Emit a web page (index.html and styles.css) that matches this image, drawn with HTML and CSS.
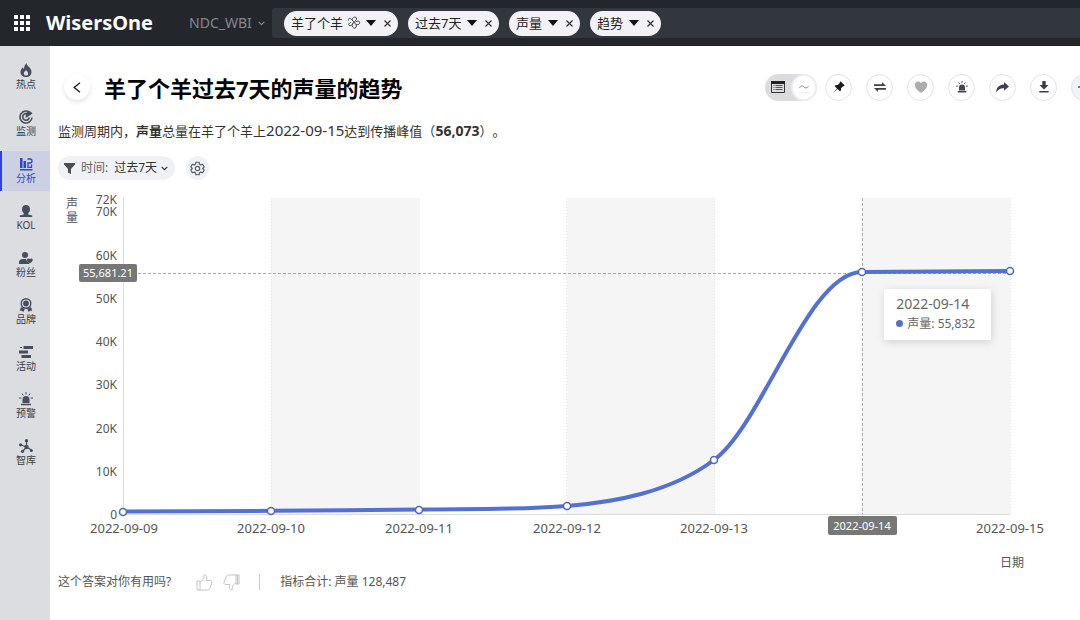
FILE: index.html
```html
<!DOCTYPE html>
<html lang="zh-CN">
<head>
    <meta charset="utf-8">
    <meta name="viewport" content="width=device-width, initial-scale=1.0">
    <title>WisersOne</title>
    <link rel="stylesheet" href="styles.css">
</head>
<body>
    <header class="topbar">
        <button class="apps" aria-label="应用">
            <svg width="16" height="16" viewBox="0 0 16 16" fill="#fff"><path d="M0 0h4v4H0zM6 0h4v4H6zM12 0h4v4h-4zM0 6h4v4H0zM6 6h4v4H6zM12 6h4v4h-4zM0 12h4v4H0zM6 12h4v4H6zM12 12h4v4h-4z"/></svg>
        </button>
        <a class="brand" href="#">WisersOne</a>
        <div class="workspace">
            <select aria-label="工作区"><option>NDC_WBI</option></select>
            <svg width="7" height="5" viewBox="0 0 7 5" fill="none" stroke="#84888d" stroke-width="1.2"><path d="M.7.8l2.8 2.8L6.3.8"/></svg>
        </div>
        <div class="query">
            <div class="chip">
                <select aria-label="对象"><option>羊了个羊</option></select>
                <svg class="pretzel" width="14" height="14" viewBox="0 0 14 14" fill="none" stroke="#444" stroke-width="1"><path d="M1.500 4.500C.8 2.500 3 1.500 4.300 3L9 8.500M3.800 6.500C2 6.800 1 8.500 2.200 9.500c1.300 1 3-.5 3.800-2.500M5 4c0-2.500 3.500-3.800 4.500-2 .8 1.500-1.500 3-3 4.500-1.800 1.800-1.800 4.500.2 5.500 2 .8 3.300-1.200 2.300-3.500M8.500 6c1.800-1.500 4.300-1 4.200.8-.1 1.600-2.200 2.200-3.700 1.700"/></svg>
                <svg class="caret" width="10" height="6" viewBox="0 0 10 6"><path d="M0 0h10L5 6z"/></svg>
                <button aria-label="移除"><svg width="7" height="7" viewBox="0 0 7 7"><path d="M.5.5l6 6M6.5.5l-6 6"/></svg></button>
            </div>
            <div class="chip">
                <select aria-label="时间范围"><option>过去7天</option></select>
                <svg class="caret" width="10" height="6" viewBox="0 0 10 6"><path d="M0 0h10L5 6z"/></svg>
                <button aria-label="移除"><svg width="7" height="7" viewBox="0 0 7 7"><path d="M.5.5l6 6M6.5.5l-6 6"/></svg></button>
            </div>
            <div class="chip">
                <select aria-label="指标"><option>声量</option></select>
                <svg class="caret" width="10" height="6" viewBox="0 0 10 6"><path d="M0 0h10L5 6z"/></svg>
                <button aria-label="移除"><svg width="7" height="7" viewBox="0 0 7 7"><path d="M.5.5l6 6M6.5.5l-6 6"/></svg></button>
            </div>
            <div class="chip">
                <select aria-label="分析方式"><option>趋势</option></select>
                <svg class="caret" width="10" height="6" viewBox="0 0 10 6"><path d="M0 0h10L5 6z"/></svg>
                <button aria-label="移除"><svg width="7" height="7" viewBox="0 0 7 7"><path d="M.5.5l6 6M6.5.5l-6 6"/></svg></button>
            </div>
        </div>
    </header>

    <div class="layout">
        <nav class="sidebar">
            <a href="#">
                <svg viewBox="0 0 14 14"><path fill-rule="evenodd" d="M7.300 0c.5 2.300 2 3 3 4.300C11.500 5.800 12.500 7 12.500 9c0 3-2.300 5-5.500 5s-5.500-2-5.500-5c0-2.200 1.300-3.700 2.500-4.800.2 1 .5 1.500 1 1.800C5 3.500 6 2 7.300 0zM7 7C6 8.300 4.800 9 4.800 10.400A2.200 2.200 0 0 0 9.200 10.400C9.200 9 8 8.300 7 7z"/></svg>
                热点
            </a>
            <a href="#">
                <svg viewBox="0 0 14 14"><path d="M11.500 3A6 6 0 1 0 13 7.500M9.300 4.500A3.300 3.300 0 1 0 10.300 7.500" fill="none" stroke="#474d5c" stroke-width="1.600"/><path d="M6.300 8L7.500 2.500C9 1 12 .8 13.500 3.500L10 6z"/></svg>
                监测
            </a>
            <a href="#" class="active">
                <svg viewBox="0 0 14 14"><path d="M1 1h2.500v10H1zM4.500 4H7v7H4.500zM1 12h12.500v1.500H1z"/><path d="M8.500 2h2.500a1.700 1.700 0 0 1 0 4H9v4.300h3.500V7.500" fill="none" stroke="#2a46d8" stroke-width="1.300"/></svg>
                分析
            </a>
            <a href="#">
                <svg viewBox="0 0 14 14"><path d="M7 1c2.400 0 4 1.600 4 4.200 0 1.800-.8 3.200-1.800 4v1.200l4 1.200V13H.8v-1.400l4-1.200V9.200C3.800 8.400 3 7 3 5.200 3 2.600 4.600 1 7 1z"/></svg>
                KOL
            </a>
            <a href="#">
                <svg viewBox="0 0 14 14"><circle cx="6" cy="4" r="3"/><path d="M0 13v-2c0-2 2-3 4-3h3c.4 1.700 1.500 3 3 4v1zM10.800 12.500C9 11 7.800 10 7.900 8.900c.1-1.500 2-1.900 2.900-.7.900-1.200 2.800-.8 2.900.7.100 1.100-1.100 2.100-2.900 3.600z"/></svg>
                粉丝
            </a>
            <a href="#">
                <svg viewBox="0 0 14 14"><circle cx="7" cy="5.500" r="4.800" fill="none" stroke="#474d5c" stroke-width="1.400"/><circle cx="7" cy="5.500" r="2.900"/><path d="M2 9l3.800 2-1.500 3-1.500-1.300-2 .1zM12 9l-3.800 2 1.500 3 1.500-1.300 2 .1z"/></svg>
                品牌
            </a>
            <a href="#">
                <svg viewBox="0 0 14 14"><path d="M4.500 1H14v3H4.500zM0 5.500h9v3H0zM2.500 10H12v3H2.500zM1 2h2v1H1z"/></svg>
                活动
            </a>
            <a href="#">
                <svg viewBox="0 0 14 14"><path d="M3.500 11V7.500a3.500 3.500 0 0 1 7 0V11zM2 11.700h10v1.600H2z"/><path d="M7 0v2.500M3 1.500l1.200 2M11 1.500l-1.200 2M0 6h2.300M11.700 6H14" fill="none" stroke="#474d5c"/></svg>
                预警
            </a>
            <a href="#">
                <svg viewBox="0 0 14 14"><path d="M7.500 2v6M7.500 8L2 6M7.500 8L4 12M7.500 8l5 3" fill="none" stroke="#474d5c" stroke-width="1.200"/><circle cx="7.500" cy="1.700" r="1.700"/><circle cx="1.600" cy="5.800" r="1.600"/><circle cx="7.500" cy="8" r="2.200"/><circle cx="3.500" cy="12.300" r="1.600"/><circle cx="12.300" cy="11.500" r="1.600"/></svg>
                智库
            </a>
        </nav>

        <main class="content">
            <div class="title-row">
                <button class="back" aria-label="返回">
                    <svg width="8" height="11" viewBox="0 0 8 11" fill="none" stroke="#222" stroke-width="1.400"><path d="M7 .8L1.200 5.500 7 10.200"/></svg>
                </button>
                <h1>羊了个羊过去7天的声量的趋势</h1>
                <div class="toolbar">
                    <div class="view-switch">
                        <button aria-label="表格">
                            <svg width="14" height="12" viewBox="0 0 14 12"><path d="M.5.5h13v11H.5z" fill="none" stroke="#333"/><path d="M0 0h14v3H0z" fill="#222"/><path d="M2.500 4.500h1M4.500 4.500h7M2.500 6.500h1M4.500 6.500h7M2.500 8.500h1M4.500 8.500h7" stroke="#555"/></svg>
                        </button>
                        <button class="selected" aria-label="图表">
                            <svg width="10" height="12" viewBox="0 0 10 12" fill="none"><path d="M.5 7C2 4.500 3.500 4.500 5 6s3 1 4.500-.5" stroke="#8a8a8a"/><path d="M0 11.500h10" stroke="#eee"/></svg>
                        </button>
                    </div>
                    <button class="tool" aria-label="固定">
                        <svg width="12" height="12" viewBox="0 0 12 12" fill="#1c1c1c"><path d="M7.500.3L11.700 4.500l-1 .8-.7-.1-2 2.100c.3 1.300 0 2.400-.9 3.200L4.600 8 .6 11.600.4 11.400 4 7.400 1.500 4.900c.8-.9 1.900-1.200 3.200-.9l2.100-2-.1-.7z"/></svg>
                    </button>
                    <button class="tool" aria-label="对比">
                        <svg width="14" height="10" viewBox="0 0 14 10" fill="#3c3f45"><path d="M1 2.200h8V0l4 4H1zM13 7.800H5V10L1 6h12z"/></svg>
                    </button>
                    <button class="tool" aria-label="收藏">
                        <svg width="14" height="12" viewBox="0 0 14 12" fill="#adadad"><path d="M7 12C3 9 .8 6.800.8 4 .8.300 5.300-.9 7 2 8.700-.9 13.200.300 13.200 4 13.200 6.800 11 9 7 12z"/></svg>
                    </button>
                    <button class="tool" aria-label="预警">
                        <svg width="12" height="12" viewBox="0 0 14 14" fill="#44474c"><path d="M3.500 11V7.500a3.500 3.500 0 0 1 7 0V11zM2 11.700h10v1.800H2z"/><path d="M7 0v2.500M3 1.500l1.200 2M11 1.500l-1.200 2M0 6h2.300M11.700 6H14" stroke="#44474c"/></svg>
                    </button>
                    <button class="tool" aria-label="分享">
                        <svg width="13" height="11" viewBox="0 0 13 11" fill="#3f424e"><path d="M8 0l5 4.500L8 8.800V6.200C4.500 6 2.500 7 .3 10.500 0 6 3 2.800 8 2.600z"/></svg>
                    </button>
                    <button class="tool" aria-label="下载">
                        <svg width="10" height="12" viewBox="0 0 10 12" fill="#3c3f4b"><path d="M3.300 0h3.400v4H9.500L5 8.500.5 4h2.800zM.3 10h9.400v1.600H.3z"/></svg>
                    </button>
                    <button class="tool more" aria-label="更多">
                        <svg width="14" height="14" viewBox="0 0 14 14" stroke="#555" stroke-width="1.500"><path d="M7 1v12M0 7h14"/></svg>
                    </button>
                </div>
            </div>

            <p class="summary">监测周期内，<strong>声量</strong>总量在羊了个羊上<span class="date">2022-09-15</span>达到传播峰值（<strong class="num">56,073</strong>）。</p>

            <div class="filters">
                <div class="filter">
                    <svg width="11" height="11" viewBox="0 0 11 11" fill="#4a4d55"><path d="M0 0h11v1.500L7 6v5L4 9.500V6L0 1.500z"/></svg>
                    <label for="period">时间:</label>
                    <select id="period"><option>过去7天</option></select>
                    <svg width="7" height="5" viewBox="0 0 7 5" fill="none" stroke="#333" stroke-width="1.200"><path d="M.7.8l2.800 2.800L6.300.8"/></svg>
                </div>
                <button class="settings" aria-label="设置">
                    <svg width="15" height="15" viewBox="0 0 24 24" fill="none" stroke="#555c6b" stroke-width="1.900" stroke-linejoin="round"><circle cx="12" cy="12" r="3.500"/><path d="M9.500 2h5l.8 3.200 1.700 1 3.200-1 2.500 4.300-2.400 2.500 2.400 2.500-2.500 4.300-3.200-1-1.700 1-.8 3.200h-5l-.8-3.200-1.700-1-3.200 1-2.500-4.300L3.700 12 1.300 9.500l2.500-4.300 3.200 1 1.700-1z"/></svg>
                </button>
            </div>

            <div class="chart">
                <svg viewBox="50 190 1030 380" role="img" aria-label="声量趋势">
                    <!-- alternating bands -->
                    <g fill="#f5f5f5">
                        <rect x="271" y="198" width="149" height="316"/>
                        <rect x="567" y="198" width="148" height="316"/>
                        <rect x="862" y="198" width="148" height="316"/>
                    </g>
                    <path class="split" d="M271.500 198v316M566.500 198v316M714.500 198v316M1010.500 198v316"/>
                    <path class="axis" d="M123.500 198v316.500H1010"/>
                    <path class="pointer" d="M123 273.500H1010M862.500 198v316"/>

                    <g class="y-labels">
                        <text x="117" y="204">72K</text>
                        <text x="117" y="216">70K</text>
                        <text x="117" y="260">60K</text>
                        <text x="117" y="303">50K</text>
                        <text x="117" y="346">40K</text>
                        <text x="117" y="389">30K</text>
                        <text x="117" y="433">20K</text>
                        <text x="117" y="476">10K</text>
                        <text x="117" y="519">0</text>
                    </g>
                    <g class="x-labels">
                        <text x="124" y="533">2022-09-09</text>
                        <text x="271" y="533">2022-09-10</text>
                        <text x="419" y="533">2022-09-11</text>
                        <text x="567" y="533">2022-09-12</text>
                        <text x="714" y="533">2022-09-13</text>
                        <text x="1010" y="533">2022-09-15</text>
                    </g>
                    <g class="axis-names">
                        <text x="72" y="208">声</text>
                        <text x="72" y="222">量</text>
                        <text x="1012" y="567">日期</text>
                    </g>

                    <path class="line" d="M123 511.500C172 511.300 222 511.200 271 510.800S370 510.200 419 509.500 518 510 567 506C616 502 671 492 714 460C763 424 808 272 862 272C911 271.500 961 271.300 1010 271"/>
                    <g class="dots">
                        <circle cx="123" cy="512" r="3.500"/>
                        <circle cx="271" cy="511" r="3.500"/>
                        <circle cx="419" cy="510" r="3.500"/>
                        <circle cx="567" cy="506" r="3.500"/>
                        <circle cx="714" cy="460" r="3.500"/>
                        <circle cx="862" cy="272" r="3.500"/>
                        <circle cx="1010" cy="271" r="3.500"/>
                    </g>

                    <g class="pointer-labels">
                        <rect x="79" y="264" width="58" height="18" rx="2"/>
                        <text x="108" y="277">55,681.21</text>
                        <rect x="828" y="516" width="69" height="19" rx="2"/>
                        <text x="862" y="530">2022-09-14</text>
                    </g>
                </svg>
                <div class="tooltip">
                    <div class="tooltip-date">2022-09-14</div>
                    <div class="tooltip-row"><i></i>声量: 55,832</div>
                </div>
            </div>

            <footer class="feedback">
                <span>这个答案对你有用吗?</span>
                <button class="like" aria-label="有用">
                    <svg width="17" height="17" viewBox="0 0 17 17"><path d="M1 7h3v9H1zM4 8c2.500-1 4-3.500 4-7 2.500-.3 3.300 2 2.200 5.500h4.300c1.500 0 1.800 1.300 1.300 2.500l-2 5.500c-.4 1-1 1.500-2 1.500H4"/></svg>
                </button>
                <button aria-label="没用">
                    <svg width="17" height="17" viewBox="0 0 17 17"><path d="M16 10h-3V1h3zM13 9c-2.500 1-4 3.500-4 7-2.500.3-3.300-2-2.200-5.500H2.500C1 10.500.7 9.200 1.200 8l2-5.500c.4-1 1-1.500 2-1.500H13M14.500 1v9"/></svg>
                </button>
                <span class="divider"></span>
                <span>指标合计: 声量 128,487</span>
            </footer>
        </main>
    </div>
</body>
</html>
```
FILE: styles.css
```css
* {
    box-sizing: border-box;
}
body {
    display: flex;
    flex-direction: column;
    min-height: 100vh;
    margin: 0;
    background: #fff;
    color: #444;
    font-family: "Noto Sans", "Noto Sans CJK SC", sans-serif;
    font-size: 12px;
    line-height: 20px;
}
button,
select {
    margin: 0;
    padding: 0;
    border: 0;
    background: none;
    color: inherit;
    font: inherit;
    cursor: pointer;
}
select {
    appearance: none;
}
button {
    display: flex;
    align-items: center;
    justify-content: center;
    flex: none;
}
svg {
    flex: none;
}
a {
    color: inherit;
    text-decoration: none;
}

/* top bar */
.topbar {
    display: flex;
    align-items: center;
    height: 46px;
    padding-left: 14px;
    background: #23272c;
}
.brand {
    margin-left: 16px;
    color: #fff;
    font-size: 20px;
    font-weight: 700;
}
.workspace {
    display: flex;
    align-items: center;
    gap: 6px;
    margin: 0 7px 0 36px;
    color: #84888d;
    font-size: 14px;
}
.query {
    display: flex;
    flex: 1;
    align-items: center;
    gap: 10px;
    height: 30px;
    padding-left: 12px;
    border-radius: 3px 0 0 3px;
    background: #32363d;
}
.chip {
    display: flex;
    align-items: center;
    height: 25px;
    padding: 0 7px;
    border-radius: 13px;
    background: #f1f1f6;
    color: #222;
    font-size: 13px;
}
.pretzel {
    margin-left: 3px;
}
.caret {
    margin: 0 8px 0 5px;
    fill: #111;
}
.chip button svg {
    fill: none;
    stroke: #333;
    stroke-width: 1.2px;
}

/* side navigation */
.layout {
    display: flex;
    flex: 1;
}
.sidebar {
    display: flex;
    flex: none;
    flex-direction: column;
    gap: 7px;
    width: 50px;
    padding-top: 11px;
    background: #dcdde1;
}
.sidebar a {
    display: flex;
    flex-direction: column;
    align-items: center;
    height: 40px;
    padding-top: 6px;
    border-left: 2px solid transparent;
    color: #3a3c42;
    font-size: 10px;
    line-height: 14px;
}
.sidebar svg {
    width: 14px;
    height: 14px;
    fill: #474d5c;
}
.sidebar .active {
    border-left-color: #2a46d8;
    background: #cdcfe3;
    color: #2a46d8;
}
.sidebar .active svg {
    fill: #2a46d8;
}

/* content */
.content {
    flex: 1;
    min-width: 0;
    padding-top: 23px;
    overflow: hidden;
}
.title-row {
    display: flex;
    align-items: center;
    height: 36px;
    padding-left: 14px;
}
.back {
    width: 26px;
    height: 26px;
    border-radius: 50%;
    box-shadow: 0 2px 4px rgba(0, 0, 0, 0.12);
}
h1 {
    margin: 0 0 0 14px;
    padding-top: 2px;
    color: #000;
    font-size: 22px;
    font-weight: 700;
    line-height: 36px;
    white-space: nowrap;
}
.toolbar {
    display: flex;
    gap: 14px;
    margin: 0 -18px 0 auto;
}
.view-switch {
    display: flex;
    align-items: center;
    width: 52px;
    height: 27px;
    margin-right: -6px;
    border-radius: 14px;
    background: #dcdcde;
}
.view-switch button {
    width: 26px;
    height: 27px;
}
.view-switch .selected {
    border: 2px solid #eee;
    border-radius: 50%;
    background: #fff;
}
.tool {
    width: 27px;
    height: 27px;
    border: 1px solid #e2e2e4;
    border-radius: 50%;
    background: #fff;
}
.more {
    background: #f1f2f6;
}
.summary {
    margin: 15px 0 0 8px;
    color: #333;
    font-size: 13px;
    line-height: 20px;
    text-spacing-trim: space-all;
}
.summary .date {
    font-size: 15px;
}
.summary .num {
    font-size: 14px;
}
.filters {
    display: flex;
    gap: 11px;
    margin: 15px 0 0 8px;
}
.filter {
    display: flex;
    align-items: center;
    height: 24px;
    padding: 0 7px 0 6px;
    border-radius: 12px;
    background: #f0f1f4;
    color: #333;
}
.filter label {
    margin: 0 6px;
    color: #666;
}
.filter select {
    margin-right: 4px;
}
.settings {
    width: 23px;
    height: 24px;
    border-radius: 50%;
    background: #f0f1f4;
}

/* trend chart */
.chart {
    position: relative;
    margin-top: 10px;
}
.chart > svg {
    display: block;
    width: 100%;
}
.chart text {
    fill: #555;
    font-size: 13px;
}
.axis {
    fill: none;
    stroke: #dcdcdc;
}
.split {
    stroke: #e4e4e4;
    stroke-dasharray: 1 2;
}
.pointer {
    stroke: #aaa;
    stroke-dasharray: 3 2;
}
.y-labels text {
    text-anchor: end;
}
.x-labels text,
.axis-names text,
.pointer-labels text {
    text-anchor: middle;
}
.chart .y-labels text,
.chart .axis-names text {
    font-size: 12px;
}
.chart .line {
    fill: none;
    stroke: #5470d0;
    stroke-width: 4px;
}
.dots circle {
    fill: #fff;
    stroke: #5068b8;
    stroke-width: 1.5px;
}
.pointer-labels rect {
    fill: #777;
}
.chart .pointer-labels text {
    fill: #fff;
    font-size: 11px;
}
.tooltip {
    position: absolute;
    top: 26%;
    left: 81%;
    padding: 5px 16px 7px 12px;
    border-radius: 2px;
    background: #fff;
    box-shadow: 1px 2px 8px rgba(0, 0, 0, 0.15);
    color: #666;
    white-space: nowrap;
}
.tooltip-date {
    font-size: 14px;
    line-height: 20px;
}
.tooltip-row {
    display: flex;
    align-items: center;
    line-height: 19px;
}
.tooltip-row i {
    width: 7px;
    height: 7px;
    margin-right: 4px;
    border-radius: 50%;
    background: #5470c6;
}

/* feedback */
.feedback {
    display: flex;
    align-items: center;
    height: 24px;
    padding-left: 8px;
    color: #555;
}
.feedback button {
    margin-right: 10px;
}
.feedback .like {
    margin-left: 25px;
}
.feedback svg {
    fill: none;
    stroke: #c4c4c4;
}
.divider {
    width: 1px;
    height: 16px;
    margin: 0 20px 0 9px;
    background: #ccc;
}
```
